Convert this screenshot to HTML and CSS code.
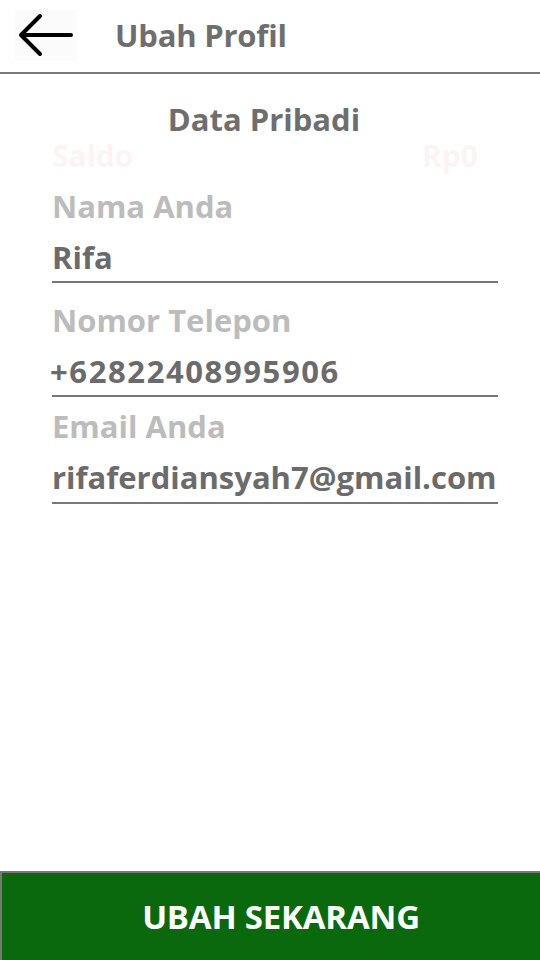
FILE: index.html
```html
<!DOCTYPE html>
<html lang="id">
<head>
<meta charset="utf-8">
<title>Ubah Profil</title>
<link rel="stylesheet" href="styles.css">
</head>
<body>
<div class="app">
  <header class="topbar">
    <button class="back" aria-label="Kembali">
      <svg width="56" height="44" viewBox="0 0 56 44" fill="none" stroke="#000" stroke-width="4" stroke-linecap="round" stroke-linejoin="round">
        <path d="M53 22H4M22 3L3 22l19 19"/>
      </svg>
    </button>
    <h1 class="title">Ubah Profil</h1>
  </header>

  <main class="content">
    <h2 class="section-title">Data Pribadi</h2>
    <div class="saldo">
      <span>Saldo</span>
      <span>Rp0</span>
    </div>

    <div class="field field-first">
      <div class="label">Nama Anda</div>
      <div class="value">Rifa</div>
    </div>
    <div class="field field-phone">
      <div class="label">Nomor Telepon</div>
      <div class="value value-phone">+62822408995906</div>
    </div>
    <div class="field field-email">
      <div class="label">Email Anda</div>
      <div class="value">rifaferdiansyah7@gmail.com</div>
    </div>
  </main>

  <button class="submit">UBAH SEKARANG</button>
</div>
</body>
</html>
```

FILE: styles.css
```css
* { box-sizing: border-box; }
html, body {
  margin: 0;
  padding: 0;
  background: #fff;
}
body {
  font-family: "Open Sans", "Noto Sans", sans-serif;
  font-weight: 700;
}
.app {
  width: 540px;
  height: 960px;
  display: flex;
  flex-direction: column;
  position: relative;
}
.topbar {
  height: 74px;
  display: flex;
  align-items: center;
  border-bottom: 2px solid #777;
  padding: 0 0 2px 15px;
}
.back {
  width: 62px;
  height: 51px;
  margin: 0;
  padding: 0;
  border: none;
  background: #fbfbfb;
  display: flex;
  align-items: center;
  justify-content: center;
}
.title {
  margin: 0 0 0 38px;
  font-size: 31px;
  font-weight: 700;
  color: #6e6e6e;
  letter-spacing: -0.2px;
}
.content {
  flex: 1;
  padding: 0 42px 0 52px;
}
.section-title {
  margin: 25px 0 0 0;
  padding-right: 22px;
  text-align: center;
  font-size: 31px;
  line-height: 40px;
  font-weight: 700;
  color: #6e6e6e;
  letter-spacing: 0;
}
.saldo {
  display: flex;
  justify-content: space-between;
  font-size: 30px;
  line-height: 34px;
  color: #fcf4f4;
  letter-spacing: 0;
  padding-right: 20px;
}
.field {
  border-bottom: 2px solid #777;
}
.field-first { margin-top: 13px; }
.field-phone { margin-top: 17px; }
.field-email { margin-top: 9px; }
.label {
  font-size: 31px;
  line-height: 40px;
  color: #bcbcbc;
  letter-spacing: 0;
}
.value {
  font-size: 31px;
  line-height: 40px;
  color: #6b6b6b;
  letter-spacing: 0;
  padding: 11px 0 4px;
  white-space: nowrap;
}
.field-email .value { padding-bottom: 5px; }
.value-phone {
  margin-left: -2px;
  letter-spacing: 1.6px;
}
.submit {
  height: 89px;
  margin: 0;
  width: 100%;
  border: 2px solid #777;
  border-bottom: none;
  border-right: none;
  background: #0a690c;
  color: #fff;
  font-family: "Open Sans", "Noto Sans", sans-serif;
  font-weight: 700;
  font-size: 33px;
  letter-spacing: -0.2px;
  padding: 0 0 0 20px;
}
```
